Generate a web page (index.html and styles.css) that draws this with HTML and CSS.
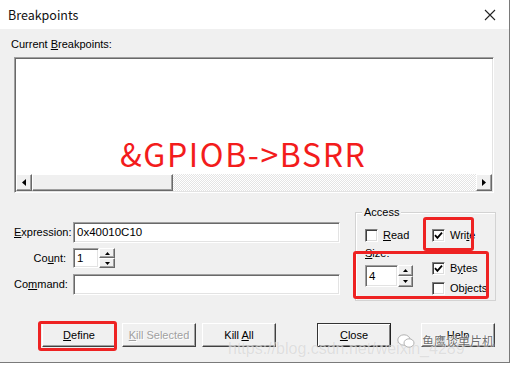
FILE: index.html
```html
<!DOCTYPE html>
<html>
<head>
<meta charset="utf-8">
<title>Breakpoints</title>
<link rel="stylesheet" href="styles.css">
</head>
<body>
<div class="window">
  <div class="titlebar">
    <span class="title">Breakpoints</span>
    <svg class="close" width="12" height="12" viewBox="0 0 12 12"><path d="M1 1L11 11M11 1L1 11" stroke="#222" stroke-width="1.1" fill="none"/></svg>
  </div>
  <div class="dialog">
    <div class="caption">Current <u>B</u>reakpoints:</div>
    <div class="listbox">
      <div class="list-area"></div>
      <div class="hscroll">
        <div class="sbtn"><svg width="4" height="7" viewBox="0 0 4 7"><path d="M4 0L0 3.5L4 7Z" fill="#000"/></svg></div>
        <div class="thumb"></div>
        <div class="track"></div>
        <div class="sbtn"><svg width="4" height="7" viewBox="0 0 4 7"><path d="M0 0L4 3.5L0 7Z" fill="#000"/></svg></div>
      </div>
    </div>
    <div class="middle">
      <div class="fields">
        <div class="flabel"><u>E</u>xpression:</div>
        <div class="edit">0x40010C10</div>
        <div class="flabel">Co<u>u</u>nt:</div>
        <div class="spin-wrap">
          <div class="edit count">1</div>
          <div class="spin">
            <div class="sp"><svg width="5" height="3" viewBox="0 0 5 3"><path d="M2.5 0L5 3H0Z" fill="#000"/></svg></div>
            <div class="sp"><svg width="5" height="3" viewBox="0 0 5 3"><path d="M0 0H5L2.5 3Z" fill="#000"/></svg></div>
          </div>
        </div>
        <div class="flabel">Co<u>m</u>mand:</div>
        <div class="edit"></div>
      </div>
      <div class="group">
        <span class="legend">Access</span>
        <div class="gcol first">
          <div class="chk"><span class="box"></span><span><u>R</u>ead</span></div>
          <div class="size-label"><u>S</u>ize:</div>
          <div class="spin-wrap">
            <div class="edit size">4</div>
            <div class="spin tall">
              <div class="sp"><svg width="5" height="3" viewBox="0 0 5 3"><path d="M2.5 0L5 3H0Z" fill="#000"/></svg></div>
              <div class="sp"><svg width="5" height="3" viewBox="0 0 5 3"><path d="M0 0H5L2.5 3Z" fill="#000"/></svg></div>
            </div>
          </div>
        </div>
        <div class="gcol second">
          <div class="chk"><span class="box"><svg width="9" height="9" viewBox="0 0 9 9"><path d="M1 4.2L3.4 6.8L8 1.6" stroke="#000" stroke-width="1.8" fill="none"/></svg></span><span>Wri<u>t</u>e</span></div>
          <div class="chk bytes"><span class="box"><svg width="9" height="9" viewBox="0 0 9 9"><path d="M1 4.2L3.4 6.8L8 1.6" stroke="#000" stroke-width="1.8" fill="none"/></svg></span><span>B<u>y</u>tes</span></div>
          <div class="chk objects"><span class="box"></span><span>Objects</span></div>
        </div>
      </div>
    </div>
    <div class="buttons">
      <div class="btn define"><span><u>D</u>efine</span></div>
      <div class="btn disabled killsel"><span><u>K</u>ill Selected</span></div>
      <div class="btn killall"><span>Kill <u>A</u>ll</span></div>
      <div class="btn close-btn"><span><u>C</u>lose</span></div>
      <div class="btn help"><span>Help</span></div>
    </div>
  </div>

  <div class="annot">&amp;GPIOB-&gt;BSRR</div>
  <div class="redbox rb-write"></div>
  <div class="redbox rb-size"></div>
  <div class="redbox rb-define"></div>

  <div class="wm-url">https://blog.csdn.net/weixin_4289</div>
  <div class="wm-wx">
    <svg width="18" height="14" viewBox="0 0 18 14"><ellipse cx="7" cy="6" rx="6.2" ry="5.2" fill="#fff" stroke="#aaa" stroke-width="0.9"/><ellipse cx="12" cy="9" rx="5" ry="4.2" fill="#fff" stroke="#aaa" stroke-width="0.9"/></svg>
    <span>鱼鹰谈单片机</span>
  </div>
</div>
</body>
</html>
```

FILE: styles.css
```css
* { box-sizing: border-box; }
html, body { margin: 0; padding: 0; background: #fff; }
body { font-family: "Liberation Sans", Arial, sans-serif; font-size: 11px; color: #000; }

.window {
  position: relative;
  width: 511px;
  height: 366px;
  overflow: hidden;
  background: #fff;
}

.titlebar {
  height: 29px;
  width: 510px;
  background: #fff;
  display: flex;
  align-items: center;
  justify-content: space-between;
  padding: 0 10px 0 8px;
  border-right: 1px solid #7a7a7a;
}
.title {
  font-family: "Noto Sans CJK SC", "Noto Sans", sans-serif;
  font-size: 12.5px;
  color: #111;
}
.close { display: block; margin-right: 3px; }

.dialog {
  width: 510px;
  height: 334px;
  background: #f0f0f0;
  border-right: 1px solid #7a7a7a;
  border-bottom: 1px solid #7a7a7a;
  display: flex;
  flex-direction: column;
}

.caption {
  margin: 8px 0 0 11px;
  height: 14px;
  line-height: 14px;
}

.listbox {
  margin: 6px 0 0 14px;
  width: 480px;
  height: 136px;
  border: 1px solid;
  border-color: #a0a0a0 #fff #fff #a0a0a0;
  box-shadow: inset 1px 1px 0 #696969, inset -1px -1px 0 #e3e3e3;
  background: #fff;
  padding: 1px;
  display: flex;
  flex-direction: column;
}
.list-area { flex: 1; background: #fff; }
.hscroll {
  height: 17px;
  display: flex;
}
.sbtn, .thumb {
  background: #f0f0f0;
  border: 1px solid;
  border-color: #fff #696969 #696969 #fff;
  box-shadow: inset -1px -1px 0 #a0a0a0;
}
.sbtn {
  width: 16px;
  display: flex;
  align-items: center;
  justify-content: center;
}
.thumb { width: 141px; }
.track {
  flex: 1;
  background-color: #f4f4f4;
  background-image: repeating-conic-gradient(#fff 0 25%, #e4e4e4 0 50%);
  background-size: 2px 2px;
}

.middle {
  display: flex;
  align-items: flex-start;
  padding-left: 14px;
  height: 108px;
}
.fields {
  margin-top: 29px;
  display: grid;
  grid-template-columns: 52px 267px;
  grid-auto-rows: 21px;
  column-gap: 7px;
  row-gap: 5px;
}
.flabel {
  text-align: right;
  line-height: 21px;
  white-space: nowrap;
}
.edit {
  height: 21px;
  background: #fff;
  border: 1px solid;
  border-color: #a0a0a0 #fff #fff #a0a0a0;
  box-shadow: inset 1px 1px 0 #696969, inset -1px -1px 0 #e3e3e3;
  padding: 0 3px;
  line-height: 19px;
  font-size: 11.5px;
}
.spin-wrap { display: flex; }
.edit.count { width: 26px; height: 20px; line-height: 18px; }
.spin {
  width: 16px;
  height: 20px;
  display: flex;
  flex-direction: column;
}
.spin.tall { width: 15px; height: 22px; }
.sp {
  flex: 1;
  display: flex;
  align-items: center;
  justify-content: center;
  background: #f0f0f0;
  border: 1px solid;
  border-color: #fff #696969 #696969 #fff;
  box-shadow: inset -1px -1px 0 #a0a0a0;
}
.sp svg { display: block; }

.group {
  position: relative;
  margin: 19px 0 0 15px;
  width: 141px;
  height: 89px;
  border: 1px solid #d3d3d3;
  box-shadow: inset 1px 1px 0 #fff;
  display: flex;
  padding: 16px 0 0 9px;
}
.legend {
  position: absolute;
  left: 6px;
  top: -8px;
  padding: 0 2px;
  background: #f0f0f0;
  line-height: 14px;
}
.gcol { display: flex; flex-direction: column; }
.gcol.first { width: 67px; }
.chk {
  display: flex;
  align-items: center;
  height: 13px;
  line-height: 13px;
  gap: 5px;
  white-space: nowrap;
}
.box {
  width: 13px;
  height: 13px;
  background: #fff;
  border: 1px solid;
  border-color: #808080 #fff #fff #808080;
  box-shadow: inset 1px 1px 0 #404040, inset -1px -1px 0 #dcdcdc;
  display: flex;
  align-items: center;
  justify-content: center;
}
.box svg { display: block; }
.size-label {
  margin-top: 5px;
  line-height: 13px;
}
.edit.size { width: 33px; height: 22px; line-height: 20px; }
.first .spin-wrap { margin-top: 5px; }
.chk.bytes { margin-top: 20px; }
.chk.objects { margin-top: 7px; }

.buttons {
  display: flex;
  padding-left: 42px;
  margin-top: 22px;
}
.btn {
  width: 74px;
  height: 24px;
  background: #f0f0f0;
  border: 1px solid;
  border-color: #fff #404040 #404040 #fff;
  box-shadow: inset -1px -1px 0 #a0a0a0;
  display: flex;
  align-items: center;
  justify-content: center;
}
.btn.disabled { color: #a0a0a0; text-shadow: 1px 1px 0 #fff; }
.killsel { margin-left: 6px; }
.killall { margin-left: 6px; }
.close-btn {
  margin-left: 41px;
  border-color: #333 #222 #222 #333;
  box-shadow: inset 1px 1px 0 #fff, inset -1px -1px 0 #808080;
}
.help { margin-left: 30px; }

.annot {
  position: absolute;
  left: 120px;
  top: 133px;
  font-family: "Noto Sans CJK SC", "Noto Sans", sans-serif;
  font-size: 32px;
  letter-spacing: 1.6px;
  line-height: 40px;
  color: #f31c1c;
  white-space: nowrap;
}
.redbox {
  position: absolute;
  border: 3px solid #ee2222;
  border-radius: 3px;
}
.rb-write { left: 423px; top: 217px; width: 51px; height: 34px; }
.rb-size { left: 353px; top: 251px; width: 136px; height: 48px; }
.rb-define { left: 38px; top: 321px; width: 79px; height: 30px; }

.wm-url {
  position: absolute;
  left: 228px;
  top: 340px;
  font-family: "Liberation Sans", Arial, sans-serif;
  font-size: 16px;
  color: rgba(190,190,190,0.45);
  text-shadow: 0 0 1px rgba(255,255,255,0.7);
  white-space: nowrap;
}
.wm-wx {
  position: absolute;
  left: 397px;
  top: 332px;
  display: flex;
  align-items: center;
  gap: 7px;
  font-family: "Noto Sans CJK SC", sans-serif;
  font-size: 12px;
  color: rgba(70,70,70,0.8);
  text-shadow: 0 0 2px #fff, 0 0 1px #fff;
  white-space: nowrap;
}
```
